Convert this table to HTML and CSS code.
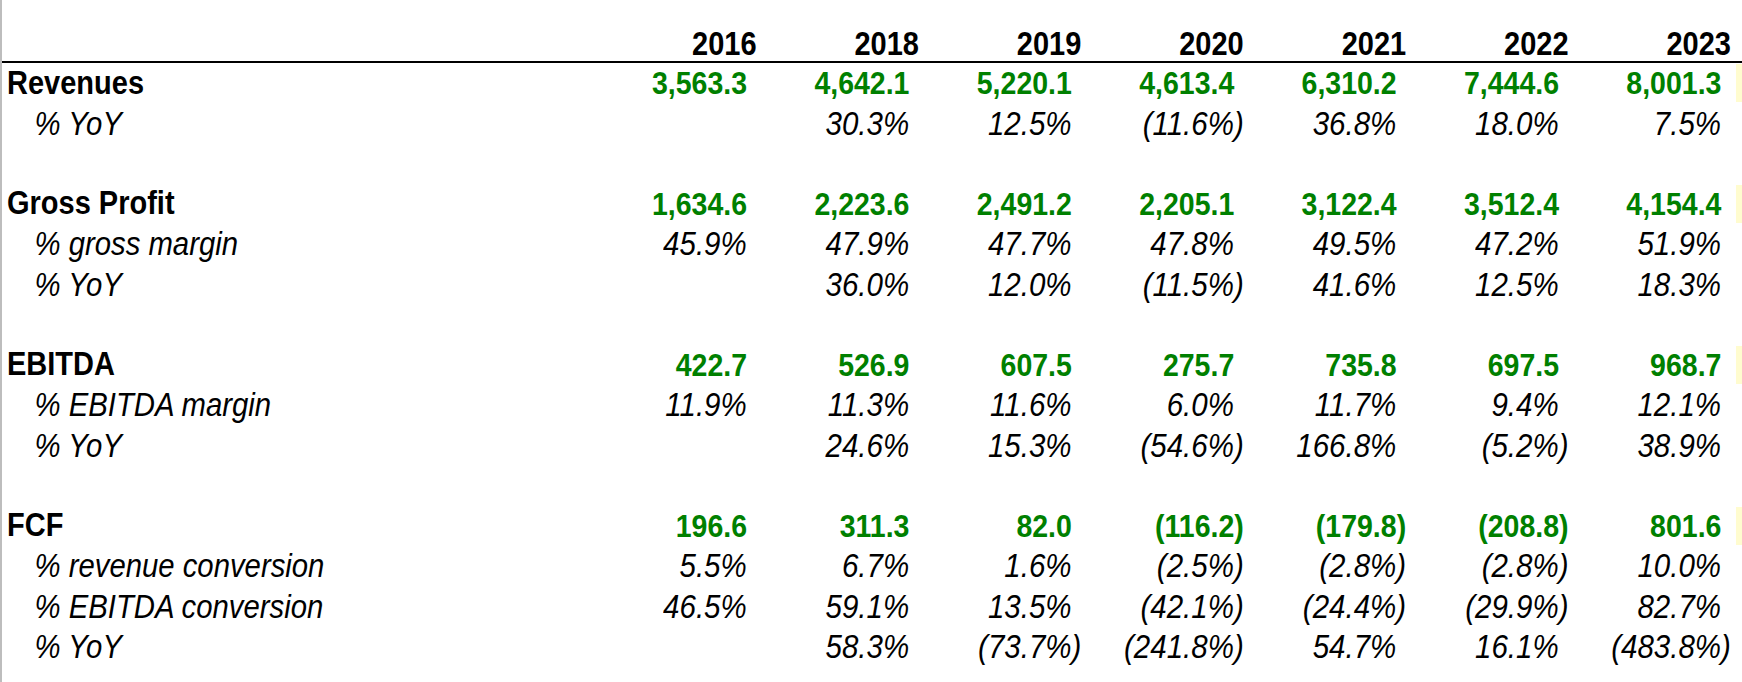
FILE: index.html
```html
<!DOCTYPE html>
<html>
<head>
<meta charset="utf-8">
<title>Financial Summary</title>
<link rel="stylesheet" href="styles.css">
</head>
<body>
<div class="sheet">
  <div class="row head">
    <div class="label"></div>
    <div class="num">2016</div>
    <div class="num">2018</div>
    <div class="num">2019</div>
    <div class="num">2020</div>
    <div class="num">2021</div>
    <div class="num">2022</div>
    <div class="num">2023</div>
    <div class="extra"></div>
  </div>

  <div class="row main">
    <div class="label">Revenues</div>
    <div class="num pos">3,563.3</div>
    <div class="num pos">4,642.1</div>
    <div class="num pos">5,220.1</div>
    <div class="num pos">4,613.4</div>
    <div class="num pos">6,310.2</div>
    <div class="num pos">7,444.6</div>
    <div class="num pos">8,001.3</div>
    <div class="extra hl"></div>
  </div>
  <div class="row sub">
    <div class="label">% YoY</div>
    <div class="num"></div>
    <div class="num pos">30.3%</div>
    <div class="num pos">12.5%</div>
    <div class="num">(11.6%)</div>
    <div class="num pos">36.8%</div>
    <div class="num pos">18.0%</div>
    <div class="num pos">7.5%</div>
    <div class="extra"></div>
  </div>
  <div class="row blank"></div>

  <div class="row main">
    <div class="label">Gross Profit</div>
    <div class="num pos">1,634.6</div>
    <div class="num pos">2,223.6</div>
    <div class="num pos">2,491.2</div>
    <div class="num pos">2,205.1</div>
    <div class="num pos">3,122.4</div>
    <div class="num pos">3,512.4</div>
    <div class="num pos">4,154.4</div>
    <div class="extra hl"></div>
  </div>
  <div class="row sub">
    <div class="label">% gross margin</div>
    <div class="num pos">45.9%</div>
    <div class="num pos">47.9%</div>
    <div class="num pos">47.7%</div>
    <div class="num pos">47.8%</div>
    <div class="num pos">49.5%</div>
    <div class="num pos">47.2%</div>
    <div class="num pos">51.9%</div>
    <div class="extra"></div>
  </div>
  <div class="row sub">
    <div class="label">% YoY</div>
    <div class="num"></div>
    <div class="num pos">36.0%</div>
    <div class="num pos">12.0%</div>
    <div class="num">(11.5%)</div>
    <div class="num pos">41.6%</div>
    <div class="num pos">12.5%</div>
    <div class="num pos">18.3%</div>
    <div class="extra"></div>
  </div>
  <div class="row blank"></div>

  <div class="row main">
    <div class="label">EBITDA</div>
    <div class="num pos">422.7</div>
    <div class="num pos">526.9</div>
    <div class="num pos">607.5</div>
    <div class="num pos">275.7</div>
    <div class="num pos">735.8</div>
    <div class="num pos">697.5</div>
    <div class="num pos">968.7</div>
    <div class="extra hl"></div>
  </div>
  <div class="row sub">
    <div class="label">% EBITDA margin</div>
    <div class="num pos">11.9%</div>
    <div class="num pos">11.3%</div>
    <div class="num pos">11.6%</div>
    <div class="num pos">6.0%</div>
    <div class="num pos">11.7%</div>
    <div class="num pos">9.4%</div>
    <div class="num pos">12.1%</div>
    <div class="extra"></div>
  </div>
  <div class="row sub">
    <div class="label">% YoY</div>
    <div class="num"></div>
    <div class="num pos">24.6%</div>
    <div class="num pos">15.3%</div>
    <div class="num">(54.6%)</div>
    <div class="num pos">166.8%</div>
    <div class="num">(5.2%)</div>
    <div class="num pos">38.9%</div>
    <div class="extra"></div>
  </div>
  <div class="row blank"></div>

  <div class="row main">
    <div class="label">FCF</div>
    <div class="num pos">196.6</div>
    <div class="num pos">311.3</div>
    <div class="num pos">82.0</div>
    <div class="num">(116.2)</div>
    <div class="num">(179.8)</div>
    <div class="num">(208.8)</div>
    <div class="num pos">801.6</div>
    <div class="extra hl"></div>
  </div>
  <div class="row sub">
    <div class="label">% revenue conversion</div>
    <div class="num pos">5.5%</div>
    <div class="num pos">6.7%</div>
    <div class="num pos">1.6%</div>
    <div class="num">(2.5%)</div>
    <div class="num">(2.8%)</div>
    <div class="num">(2.8%)</div>
    <div class="num pos">10.0%</div>
    <div class="extra"></div>
  </div>
  <div class="row sub">
    <div class="label">% EBITDA conversion</div>
    <div class="num pos">46.5%</div>
    <div class="num pos">59.1%</div>
    <div class="num pos">13.5%</div>
    <div class="num">(42.1%)</div>
    <div class="num">(24.4%)</div>
    <div class="num">(29.9%)</div>
    <div class="num pos">82.7%</div>
    <div class="extra"></div>
  </div>
  <div class="row sub">
    <div class="label">% YoY</div>
    <div class="num"></div>
    <div class="num pos">58.3%</div>
    <div class="num">(73.7%)</div>
    <div class="num">(241.8%)</div>
    <div class="num pos">54.7%</div>
    <div class="num pos">16.1%</div>
    <div class="num">(483.8%)</div>
    <div class="extra"></div>
  </div>
</div>
</body>
</html>
```

FILE: styles.css
```css
html, body {
  margin: 0;
  padding: 0;
  background: #ffffff;
}

body {
  font-family: "Liberation Sans", Arial, sans-serif;
  font-size: 28.5px;
  color: #000000;
}

.sheet {
  border-left: 2px solid #bdbdbd;
  min-height: 682px;
  box-sizing: border-box;
}

.row {
  display: grid;
  grid-template-columns: 597.2px repeat(7, 162.4px) 1fr;
  height: 40.25px;
  align-items: center;
  white-space: nowrap;
  line-height: 1;
}

.row > .label,
.row > .num {
  transform: scaleY(1.12);
}

.row.head {
  height: 63px;
  border-bottom: 2px solid #000000;
  align-items: end;
  box-sizing: border-box;
  font-weight: bold;
  font-size: 29px;
}

.head .num {
  padding-bottom: 2px;
  transform: scaleY(1.16);
}

.row.blank {
  display: block;
}

.label {
  padding-left: 5px;
}

.main .label {
  font-size: 29px;
}

.sub > div {
  font-style: italic;
}

.sub .label {
  padding-left: 32.5px;
  font-size: 29.3px;
}

.sub .num {
  font-size: 29.5px;
}

.num {
  text-align: right;
  padding-right: 5px;
}

.main {
  font-weight: bold;
}

.main .num {
  color: #008000;
}

.pos::after {
  content: ")";
  visibility: hidden;
}

.extra {
  align-self: stretch;
}

.extra.hl {
  background: #fffccf;
  margin: 1px 0;
}
```
